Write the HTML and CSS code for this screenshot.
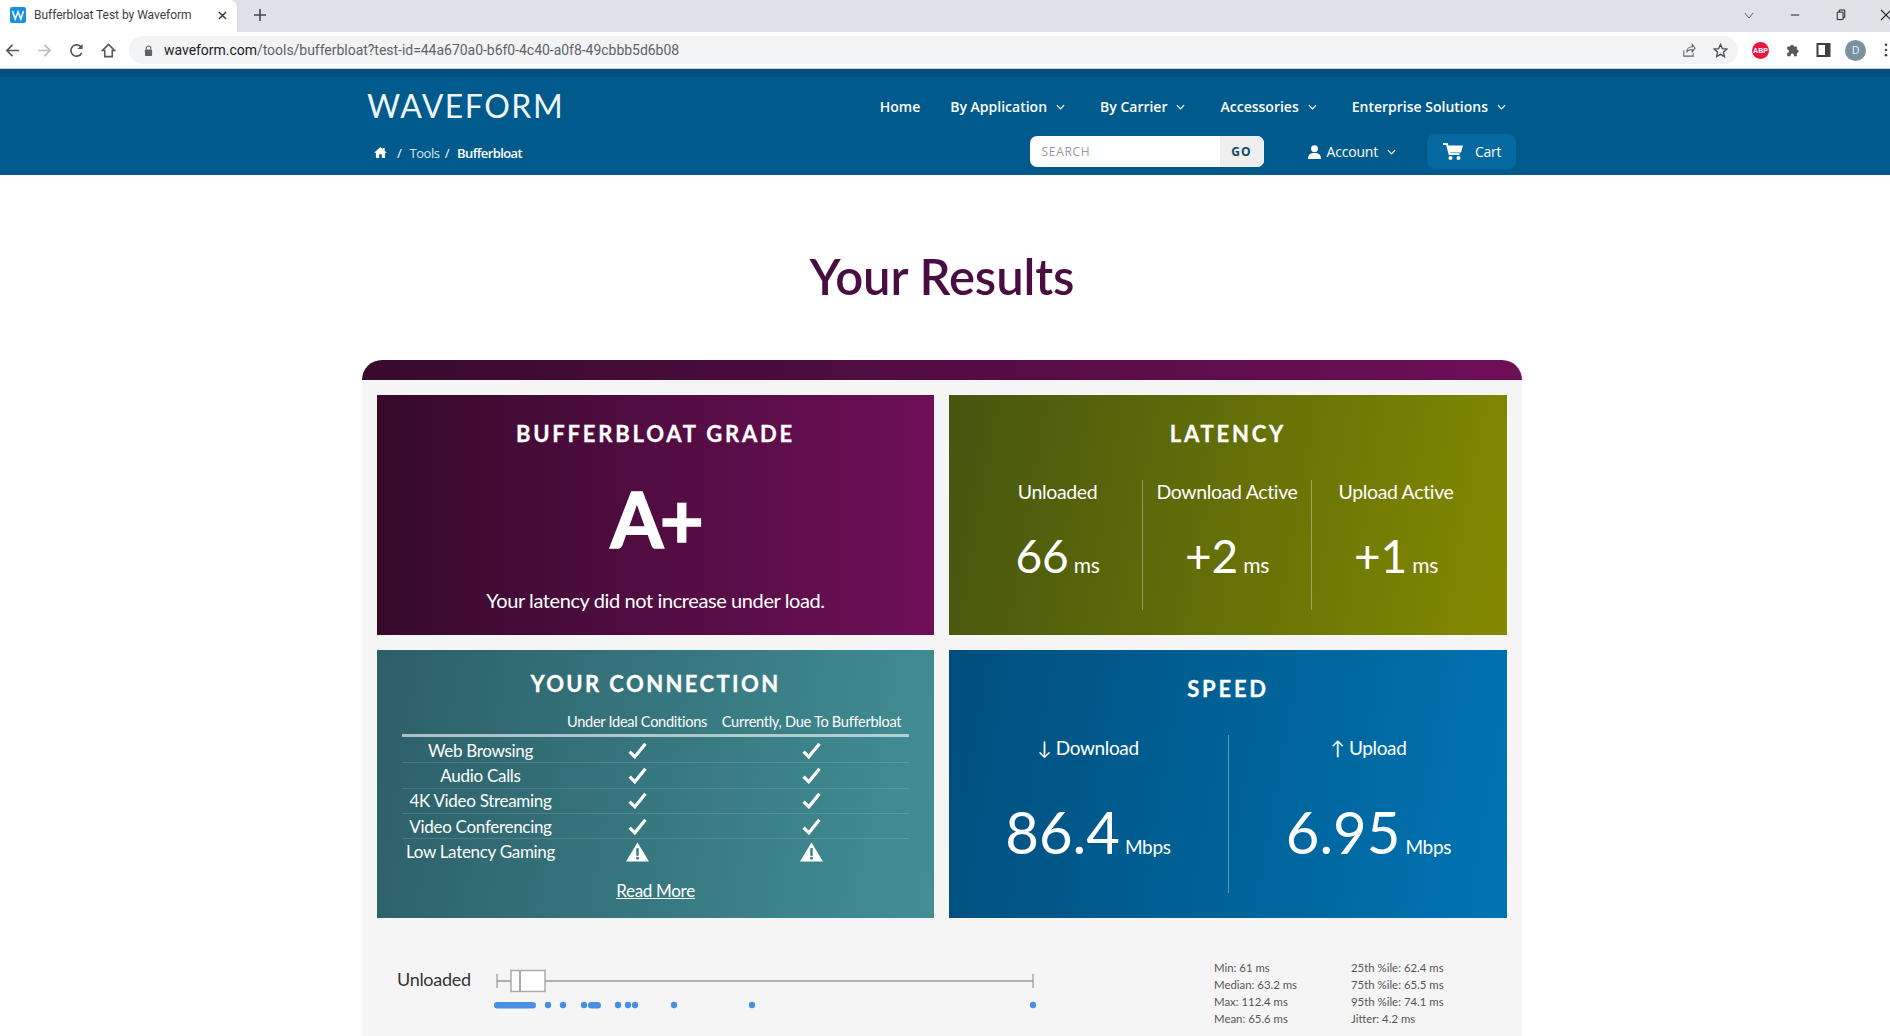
FILE: index.html
```html
<!DOCTYPE html>
<html lang="en">
<head>
<meta charset="utf-8">
<title>Bufferbloat Test by Waveform</title>
<link rel="stylesheet" href="styles.css">
</head>
<body>
<div class="tabstrip">
  <div class="tab">
    <svg class="favicon" viewBox="0 0 16 16"><rect width="16" height="16" rx="2" fill="#1a8fe0"/><path d="M2.5 4l2.7 8 2.8-7 2.8 7 2.7-8" fill="none" stroke="#dff1ff" stroke-width="1.8"/></svg>
    <span class="tab-title">Bufferbloat Test by Waveform</span>
    <svg class="tab-close" viewBox="0 0 10 10"><path d="M1 1l8 8M9 1l-8 8" stroke="#333" stroke-width="1.5"/></svg>
  </div>
  <svg class="newtab" viewBox="0 0 12 12"><path d="M6 0v12M0 6h12" stroke="#45494e" stroke-width="1.6"/></svg>
  <div class="winctl">
    <svg class="wc wc-chev" viewBox="0 0 12 8"><path d="M1 1l5 6 5-6" fill="none" stroke="#444" stroke-width="1"/></svg>
    <svg class="wc wc-min" viewBox="0 0 12 12"><path d="M1 6h10" stroke="#222" stroke-width="1.2"/></svg>
    <svg class="wc wc-res" viewBox="0 0 12 14"><path d="M1.5 3.5h7v9h-7zM4 3.5V1h6.5v9H8.5" fill="none" stroke="#222" stroke-width="1.2"/></svg>
    <svg class="wc wc-close" viewBox="0 0 12 12"><path d="M1 1l10 10M11 1L1 11" stroke="#222" stroke-width="1.1"/></svg>
  </div>
</div>
<div class="toolbar">
  <svg class="tb-icon tb-back" viewBox="0 0 16 16"><path d="M15 8H2M8 2L2 8l6 6" fill="none" stroke="#55585c" stroke-width="1.8"/></svg>
  <svg class="tb-icon tb-fwd" viewBox="0 0 16 16"><path d="M1 8h13M8 2l6 6-6 6" fill="none" stroke="#b9bbbe" stroke-width="1.8"/></svg>
  <svg class="tb-icon tb-reload" viewBox="0 0 16 16"><path d="M13.5 10.5A6 6 0 1 1 13 4.6" fill="none" stroke="#55585c" stroke-width="1.8"/><path d="M14.5 1v5.5H9z" fill="#55585c"/></svg>
  <svg class="tb-icon tb-home" viewBox="0 0 16 16"><path d="M8 1.5L1.5 8H4v6.5h8V8h2.5z" fill="none" stroke="#55585c" stroke-width="1.7"/></svg>
  <div class="omnibox">
    <svg class="lock" viewBox="0 0 10 12"><path d="M2.5 5V3.5a2.5 2.5 0 0 1 5 0V5" fill="none" stroke="#5f6368" stroke-width="1.2"/><rect x="1" y="5" width="8" height="7" rx="1" fill="#5f6368"/></svg>
    <span class="url"><span class="url-host">waveform.com</span>/tools/bufferbloat?test-id=44a670a0-b6f0-4c40-a0f8-49cbbb5d6b08</span>
    <svg class="omni-share" viewBox="0 0 16 16"><path d="M3 8v6h10v-3M6 10c0-4 3-6 6-6V1.500l3 4-3 4V7c-3 0-5 1-6 3z" fill="none" stroke="#5f6368" stroke-width="1.1"/></svg>
    <svg class="omni-star" viewBox="0 0 16 16"><path d="M8 1.500l2 4.500 4.800.5-3.600 3.200 1 4.800L8 12.100l-4.200 2.400 1-4.800L1.200 6.500 6 6z" fill="none" stroke="#4b4e52" stroke-width="1.400"/></svg>
  </div>
  <div class="ext-abp">ABP</div>
  <svg class="tb-ext" viewBox="0 0 16 16"><path d="M2 4h3.500a2 2 0 1 1 4 0H13v3.500a2 2 0 1 1 0 4V15H9.500a2 2 0 1 0-3.500 0H2v-3.500a2 2 0 1 0 0-4z" fill="#55585c"/></svg>
  <svg class="tb-ext" viewBox="0 0 14 14"><path d="M1 1h12v12H1z" fill="none" stroke="#3c4043" stroke-width="2"/><path d="M8.500 1H13v12H8.500z" fill="#3c4043"/></svg>
  <div class="avatar">D</div>
  <svg class="tb-menu" viewBox="0 0 4 16"><circle cx="2" cy="2" r="1.500" fill="#444"/><circle cx="2" cy="8" r="1.500" fill="#444"/><circle cx="2" cy="14" r="1.500" fill="#444"/></svg>
</div>

<header class="site-header">
  <div class="header-inner">
    <div class="header-top">
      <a class="logo">WAVEFORM</a>
      <nav class="nav">
        <a class="nav-link nav-home">Home</a>
        <a class="nav-link">By Application<svg class="caret" viewBox="0 0 10 6"><path d="M1 1l4 4 4-4" fill="none" stroke="#fff" stroke-width="1.300"/></svg></a>
        <a class="nav-link">By Carrier<svg class="caret" viewBox="0 0 10 6"><path d="M1 1l4 4 4-4" fill="none" stroke="#fff" stroke-width="1.300"/></svg></a>
        <a class="nav-link">Accessories<svg class="caret" viewBox="0 0 10 6"><path d="M1 1l4 4 4-4" fill="none" stroke="#fff" stroke-width="1.300"/></svg></a>
        <a class="nav-link">Enterprise Solutions<svg class="caret" viewBox="0 0 10 6"><path d="M1 1l4 4 4-4" fill="none" stroke="#fff" stroke-width="1.300"/></svg></a>
      </nav>
    </div>
    <div class="header-bottom">
      <div class="crumbs">
        <svg class="crumb-home" viewBox="0 0 14 12"><path d="M7 0L0 6.200h2V12h3.500V8h3v4H12V6.200h2L11.500 4V1h-2v1.300z" fill="#fff"/></svg>
        <span class="crumb-sep">/</span>
        <a class="crumb-link">Tools</a>
        <span class="crumb-sep2">/</span>
        <span class="crumb-current">Bufferbloat</span>
      </div>
      <div class="header-tools">
        <div class="search"><span class="search-ph">SEARCH</span><span class="search-go">GO</span></div>
        <a class="account">
          <svg class="account-icon" viewBox="0 0 12 13"><circle cx="6" cy="3.500" r="3.200" fill="#fff"/><path d="M0 13c0-4 2-5.500 6-5.500s6 1.500 6 5.500z" fill="#fff"/></svg>
          Account
          <svg class="caret" viewBox="0 0 10 6"><path d="M1 1l4 4 4-4" fill="none" stroke="#fff" stroke-width="1.300"/></svg>
        </a>
        <a class="cart">
          <svg class="cart-icon" viewBox="0 0 20 17"><path d="M0 1h4l2.500 10h10" fill="none" stroke="#fff" stroke-width="2"/><path d="M5 2.500h15l-2 7H6.500z" fill="#fff"/><circle cx="7.500" cy="15" r="2" fill="#fff"/><circle cx="15.500" cy="15" r="2" fill="#fff"/></svg>
          Cart
        </a>
      </div>
    </div>
  </div>
</header>

<main class="page">
  <h1 class="page-title">Your Results</h1>
  <section class="panel">
    <div class="panel-bar"></div>
    <div class="panel-body">
      <div class="cards">
        <article class="card card-grade">
          <h2 class="card-title title-grade">BUFFERBLOAT GRADE</h2>
          <div class="grade">A+</div>
          <p class="grade-note">Your latency did not increase under load.</p>
        </article>
        <article class="card card-latency">
          <h2 class="card-title title-latency">LATENCY</h2>
          <div class="metrics metrics-3">
            <div class="metric"><div class="metric-label">Unloaded</div><div class="metric-value">66<span class="unit">ms</span></div></div>
            <div class="metric"><div class="metric-label">Download Active</div><div class="metric-value">+2<span class="unit">ms</span></div></div>
            <div class="metric"><div class="metric-label">Upload Active</div><div class="metric-value">+1<span class="unit">ms</span></div></div>
          </div>
        </article>
        <article class="card card-conn">
          <h2 class="card-title title-conn">YOUR CONNECTION</h2>
          <div class="conn-table">
            <div class="conn-row conn-head"><span></span><span>Under Ideal Conditions</span><span>Currently, Due To Bufferbloat</span></div>
            <div class="conn-row"><span>Web Browsing</span><svg class="check" viewBox="0 0 18 16"><path d="M1.500 9l5 5L16.500 1.500" fill="none" stroke="#fff" stroke-width="3"/></svg><svg class="check" viewBox="0 0 18 16"><path d="M1.500 9l5 5L16.500 1.500" fill="none" stroke="#fff" stroke-width="3"/></svg></div>
            <div class="conn-row"><span>Audio Calls</span><svg class="check" viewBox="0 0 18 16"><path d="M1.500 9l5 5L16.500 1.500" fill="none" stroke="#fff" stroke-width="3"/></svg><svg class="check" viewBox="0 0 18 16"><path d="M1.500 9l5 5L16.500 1.500" fill="none" stroke="#fff" stroke-width="3"/></svg></div>
            <div class="conn-row"><span>4K Video Streaming</span><svg class="check" viewBox="0 0 18 16"><path d="M1.500 9l5 5L16.500 1.500" fill="none" stroke="#fff" stroke-width="3"/></svg><svg class="check" viewBox="0 0 18 16"><path d="M1.500 9l5 5L16.500 1.500" fill="none" stroke="#fff" stroke-width="3"/></svg></div>
            <div class="conn-row"><span>Video Conferencing</span><svg class="check" viewBox="0 0 18 16"><path d="M1.500 9l5 5L16.500 1.500" fill="none" stroke="#fff" stroke-width="3"/></svg><svg class="check" viewBox="0 0 18 16"><path d="M1.500 9l5 5L16.500 1.500" fill="none" stroke="#fff" stroke-width="3"/></svg></div>
            <div class="conn-row conn-last"><span>Low Latency Gaming</span><svg class="warn" viewBox="0 0 24 20"><path d="M12 0L24 20H0z" fill="#fff"/><path d="M12 6v8" stroke="#3a7f88" stroke-width="2.600"/><circle cx="12" cy="16.500" r="1.500" fill="#3a7f88"/></svg><svg class="warn" viewBox="0 0 24 20"><path d="M12 0L24 20H0z" fill="#fff"/><path d="M12 6v8" stroke="#3a7f88" stroke-width="2.600"/><circle cx="12" cy="16.500" r="1.500" fill="#3a7f88"/></svg></div>
          </div>
          <a class="read-more">Read More</a>
        </article>
        <article class="card card-speed">
          <h2 class="card-title title-speed">SPEED</h2>
          <div class="metrics metrics-2">
            <div class="metric"><div class="metric-label">↓ Download</div><div class="metric-value value-big">86.4<span class="unit unit-big">Mbps</span></div></div>
            <div class="metric"><div class="metric-label">↑ Upload</div><div class="metric-value value-big">6.95<span class="unit unit-big">Mbps</span></div></div>
          </div>
        </article>
      </div>
      <div class="dist-row">
        <div class="dist-name">Unloaded</div>
        <svg class="dist-plot" viewBox="0 0 560 60">
          <path d="M15 18v14M551 18v14" stroke="#aaa" stroke-width="1.500"/>
          <path d="M15 25h14M63 25h488" stroke="#999" stroke-width="1.300"/>
          <rect x="29" y="14.500" width="34" height="21" fill="#fff" stroke="#aaa" stroke-width="1.500"/>
          <path d="M38 14.500v21" stroke="#aaa" stroke-width="2"/>
          <rect x="12" y="46" width="42" height="6.500" rx="3.200" fill="#4a90e2"/>
          <rect x="106" y="46" width="13" height="6.500" rx="3.200" fill="#4a90e2"/>
          <g fill="#4a90e2"><circle cx="66" cy="49" r="3.200"/><circle cx="81" cy="49" r="3.200"/><circle cx="102" cy="49" r="3.200"/><circle cx="136" cy="49" r="3.200"/><circle cx="146" cy="49" r="3.200"/><circle cx="153" cy="49" r="3.200"/><circle cx="192" cy="49" r="3.200"/><circle cx="270" cy="49" r="3.200"/><circle cx="551" cy="49" r="3.200"/></g>
        </svg>
        <div class="stats">
          <span>Min: 61 ms</span><span>25th %ile: 62.4 ms</span>
          <span>Median: 63.2 ms</span><span>75th %ile: 65.5 ms</span>
          <span>Max: 112.4 ms</span><span>95th %ile: 74.1 ms</span>
          <span>Mean: 65.6 ms</span><span>Jitter: 4.2 ms</span>
        </div>
      </div>
    </div>
  </section>
</main>
</body>
</html>
```
FILE: styles.css
```css
* { box-sizing: border-box; }
html, body { margin: 0; height: 100%; }
body { height: 1036px; overflow: hidden; background: #fff; font-family: "Lato", "Noto Sans", sans-serif; }
h1, h2, p { margin: 0; }
svg { display: block; flex: none; }

/* browser chrome */
.tabstrip { height: 32px; background: #dee1e6; display: flex; align-items: center; font-family: "Roboto", sans-serif; }
.tab { width: 237px; height: 32px; background: #fff; border-radius: 0 8px 0 0; display: flex; align-items: center; padding: 0 0 2px 10px; }
.favicon { width: 16px; height: 16px; }
.tab-title { font-size: 12px; color: #3c4043; margin-left: 8px; width: 184px; white-space: nowrap; letter-spacing: -.03px; }
.tab-close { width: 9px; height: 9px; }
.newtab { width: 12px; height: 12px; margin: -2px 0 0 17px; }
.winctl { margin-left: auto; display: flex; align-items: center; padding-bottom: 2px; }
.wc-chev { width: 10px; height: 7px; margin-right: 36px; }
.wc-min { width: 10px; height: 10px; margin-right: 36px; }
.wc-res { width: 10px; height: 12px; margin-right: 34px; }
.wc-close { width: 12px; height: 12px; margin-right: -2px; }

.toolbar { height: 37px; background: #fff; display: flex; align-items: center; border-bottom: 1px solid #d0d0d0; padding-left: 5px; overflow: hidden; }
.tb-icon { width: 15px; height: 15px; }
.tb-fwd { margin-left: 17px; }
.tb-reload { margin-left: 17px; }
.tb-home { margin-left: 17px; }
.omnibox { flex: none; margin-left: 13px; width: 1609px; height: 28px; border-radius: 14px; background: #f1f3f4; display: flex; align-items: center; padding-left: 15px; font-family: "Roboto", sans-serif; }
.lock { width: 9px; height: 11px; }
.url { font-size: 14px; color: #5f6368; margin-left: 11px; white-space: nowrap; letter-spacing: -.03px; }
.url-host { color: #202124; }
.omni-share { width: 15px; height: 15px; margin-left: auto; }
.omni-star { width: 15px; height: 15px; margin-left: 17px; margin-right: 10px; }
.ext-abp { flex: none; width: 17px; height: 17px; border-radius: 50%; background: #e8173f; color: #fff; font: 700 7px "Liberation Sans", sans-serif; display: flex; align-items: center; justify-content: center; margin-left: 14px; }
.tb-ext { width: 15px; height: 14px; margin-left: 16px; }
.avatar { flex: none; width: 21px; height: 21px; border-radius: 50%; background: #7a929f; color: #eef; font: 10px "Liberation Sans", sans-serif; display: flex; align-items: center; justify-content: center; margin-left: 14px; }
.tb-menu { width: 4px; height: 14px; margin-left: 18px; }

/* header */
.site-header { height: 106px; background: #005a8c; border-top: 8px solid #005080; color: #fff; }
.header-inner { width: 1149px; margin-left: 367px; display: flex; flex-direction: column; }
.header-top { display: flex; justify-content: space-between; align-items: flex-start; height: 57px; }
.logo { font-size: 32px; font-weight: 400; letter-spacing: 1.500px; line-height: 36px; margin-top: 11px; color: #eef4f8; }
.nav { display: flex; margin-top: 20px; padding-right: 10px; }
.nav-link { font: 600 14px/20px "Open Sans", sans-serif; display: flex; align-items: center; margin-left: 35px; }
.nav-home { margin-right: -5px; }
.caret { width: 9px; height: 6px; margin-left: 9px; }
.header-bottom { display: flex; justify-content: space-between; align-items: center; }
.crumbs { display: flex; align-items: center; font: 13px/20px "Open Sans", sans-serif; letter-spacing: -.4px; padding-left: 7px; margin-top: 2px; }
.crumb-home { width: 13px; height: 11px; }
.crumb-sep { margin-left: 10px; }
.crumb-link { margin-left: 8px; color: #dbe8f0; }
.crumb-sep2 { margin-left: 5px; }
.crumb-current { margin-left: 8px; font-weight: 600; letter-spacing: -.6px; }
.header-tools { display: flex; align-items: center; }
.search { width: 234px; height: 31px; border-radius: 7px; background: #fff; display: flex; align-items: stretch; overflow: hidden; }
.search-ph { flex: 1; font: 12px/31px "Open Sans", sans-serif; color: #999; letter-spacing: .7px; padding-left: 12px; }
.search-go { width: 44px; background: #eee; color: #13466b; font: 700 12px/31px "Open Sans", sans-serif; letter-spacing: 1.300px; text-align: center; }
.account { display: flex; align-items: center; font: 14px/20px "Open Sans", sans-serif; letter-spacing: -.2px; margin-left: 44px; }
.account-icon { width: 13px; height: 14px; margin-right: 6px; }
.cart { display: flex; align-items: center; width: 89px; height: 35px; border-radius: 8px; background: #0568a0; font: 14px/20px "Open Sans", sans-serif; letter-spacing: -.3px; padding-left: 16px; margin-left: 31px; }
.cart-icon { width: 20px; height: 17px; margin-right: 12px; }

/* page */
.page { width: 1160px; margin-left: 362px; }
.page-title { text-align: center; font-size: 49px; line-height: 60px; font-weight: 600; color: #4a0d42; padding-top: 71px; height: 185px; letter-spacing: -.1px; }
.panel-bar { height: 20px; border-radius: 20px 20px 0 0; background: linear-gradient(90deg, #380a2d, #6e0f58); }
.panel-body { background: #f5f5f5; padding: 15px 15px 60px; }
.cards { display: grid; grid-template-columns: 557px 558px; grid-template-rows: 240px 268px; column-gap: 15px; row-gap: 15px; }
.card { color: #fff; text-align: center; display: flex; flex-direction: column; }
.card-grade { background: linear-gradient(90deg, #360a2b, #6e0f58); }
.card-latency { background: linear-gradient(100deg, #46550f, #838a00); }
.card-conn { background: linear-gradient(100deg, #2c5f68, #428f96); }
.card-speed { background: linear-gradient(100deg, #004f7c, #0074b3); }
.card-title { font-size: 22px; line-height: 30px; font-weight: 700; letter-spacing: 2.800px; -webkit-text-stroke: .3px #fff; }
.title-grade, .title-latency { padding-top: 24px; }
.title-conn { padding-top: 19px; letter-spacing: 2.400px; }
.title-speed { padding-top: 24px; }
.grade { font-size: 76px; line-height: 80px; font-weight: 700; margin-top: 30px; letter-spacing: -3.500px; -webkit-text-stroke: 1.500px #fff; }
.grade-note { font-size: 20px; line-height: 28px; margin-top: 27px; letter-spacing: -.4px; }

.metrics { display: grid; }
.metrics-3 { grid-template-columns: repeat(3, 169px); justify-content: center; margin-top: 31px; padding-right: 3px; }
.metrics-2 { grid-template-columns: repeat(2, 280px); justify-content: center; margin-top: 31px; }
.metric + .metric { border-left: 1px solid rgba(255,255,255,.35); }
.metrics-3 .metric { height: 130px; }
.metrics-2 .metric { height: 158px; }
.metric-label { font-size: 19.500px; line-height: 24px; letter-spacing: -.35px; }
.metrics-2 .metric-label { font-size: 19px; line-height: 26px; }
.metric-value { font-size: 46px; line-height: 60px; font-weight: 400; margin-top: 22px; }
.unit { font-size: 21px; font-weight: 400; margin-left: 5px; letter-spacing: -.3px; }
.value-big { font-size: 58px; line-height: 70px; margin-top: 36px; }
.unit-big { margin-left: 5px; font-size: 19px; }

.conn-table { margin: 10px 25px 0; }
.conn-row { display: grid; grid-template-columns: 157px 156px 193px; align-items: center; justify-items: center; height: 25.300px; font-size: 17px; letter-spacing: -.3px; white-space: nowrap; border-bottom: 1px solid rgba(255,255,255,.13); }
.conn-head { height: 28px; font-size: 14.600px; border-bottom: 3px solid rgba(255,255,255,.6); margin-bottom: 1px; }
.conn-last { border-bottom: 0; }
.check { width: 19px; height: 17px; }
.warn { width: 23px; height: 20px; }
.read-more { font-size: 17px; line-height: 24px; text-decoration: underline; margin-top: 15px; letter-spacing: -.3px; }

.dist-row { display: flex; align-items: flex-start; padding: 40px 0 0 20px; }
.dist-name { font-size: 18px; line-height: 24px; color: #333; letter-spacing: -.3px; width: 85px; margin-top: 9px; }
.dist-plot { width: 560px; height: 60px; margin-top: -2px; }
.stats { display: grid; grid-template-columns: 137px 120px; font-size: 11.400px; line-height: 17px; color: #555; margin: 1px 0 0 172px; white-space: nowrap; }
```
